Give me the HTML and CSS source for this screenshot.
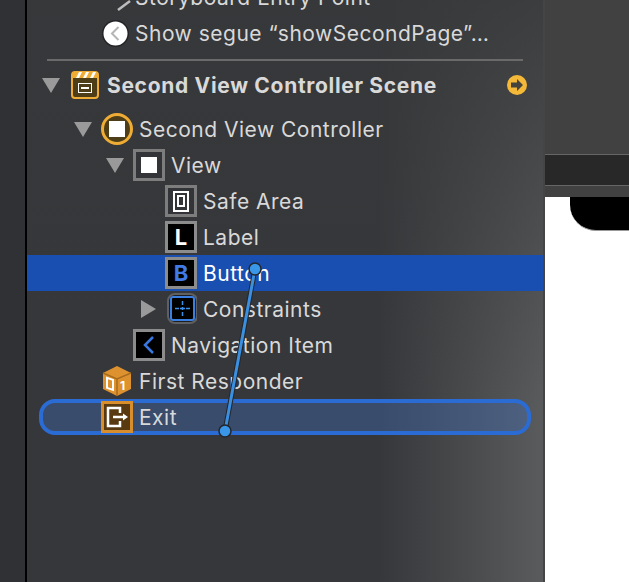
FILE: index.html
```html
<!DOCTYPE html>
<html lang="en">
<head>
<meta charset="utf-8">
<title>Document Outline</title>
<link rel="stylesheet" href="styles.css">
</head>
<body>
<div class="app">
  <div class="gutter"></div>
  <div class="panel">
    <div class="outline">
      <div class="row d2b"><span class="slot"></span>
        <svg class="ic26" viewBox="0 0 27 27"><path d="M16 26 L28 17" fill="none" stroke="#bdbdbd" stroke-width="2.500"/></svg>
        <span class="txt">Storyboard Entry Point</span></div>
      <div class="row d2b"><span class="slot"></span>
        <svg class="ic26" viewBox="0 0 27 27"><circle cx="13.500" cy="13.500" r="13.500" fill="#232427"/><circle cx="13.500" cy="13.500" r="12" fill="#fff"/><path d="M16.500 7 L10 13.500 L16.500 20" fill="none" stroke="#b5b5b5" stroke-width="2"/></svg>
        <span class="txt">Show segue “showSecondPage”…</span></div>
      <div class="sep"></div>
      <div class="row scene d1"><span class="slot"><i class="tri"></i></span>
        <svg class="ic28" viewBox="0 0 28 28"><rect x="1" y="1" width="26" height="26" rx="3" fill="#4e3e18" stroke="#f0ad35" stroke-width="2"/><rect x="1" y="1" width="26" height="6" fill="#f0ad35"/><path d="M5 7l3-6h3l-3 6zM12 7l3-6h3l-3 6zM19 7l3-6h3l-3 6z" fill="#fff"/><rect x="7" y="12" width="14" height="10" fill="#fff"/><rect x="8" y="13" width="12" height="8" fill="#4e3e18"/><rect x="10" y="16" width="8" height="2" fill="#fff"/></svg>
        <span class="txt bold">Second View Controller Scene</span>
        <svg class="goto" viewBox="0 0 20 20"><circle cx="10" cy="10" r="10" fill="#f5b93a"/><path d="M4 7.500h6V4l6 6-6 6v-3.500H4z" fill="#44433d"/></svg>
      </div>
      <div class="row d2"><span class="slot"><i class="tri"></i></span>
        <svg class="ic32" viewBox="0 0 32 32"><circle cx="16" cy="16" r="14.500" fill="#4e3e18" stroke="#f0ad35" stroke-width="3"/><rect x="8" y="8" width="16" height="16" fill="#fff"/></svg>
        <span class="txt">Second View Controller</span></div>
      <div class="row d3"><span class="slot"><i class="tri"></i></span>
        <span class="box view"><i class="sq"></i></span>
        <span class="txt">View</span></div>
      <div class="row d4"><span class="slot"></span>
        <span class="box view"><i class="safe"><i class="safe-in"></i></i></span>
        <span class="txt">Safe Area</span></div>
      <div class="row d4"><span class="slot"></span>
        <span class="box dark lbl">L</span>
        <span class="txt">Label</span></div>
      <div class="row d4 selected"><span class="slot"></span>
        <span class="box dark btn">B</span>
        <span class="txt">Button</span></div>
      <div class="row d4"><span class="slot"><i class="tri side"></i></span>
        <svg class="ic32" viewBox="0 0 32 32"><rect x="3" y="1" width="29" height="29" rx="7" fill="#1d1e20" stroke="#606062" stroke-width="2"/><rect x="6" y="4" width="23" height="23" rx="2" fill="#000" stroke="#3a7fe0" stroke-width="2"/><path d="M17.500 8v4M17.500 14v3M17.500 19v4M10 15.500h4M15 15.500h5M21 15.500h4" stroke="#3a8fe6" stroke-width="1.500" fill="none"/></svg>
        <span class="txt">Constraints</span></div>
      <div class="row d3"><span class="slot"></span>
        <span class="box dark"><svg class="inner" viewBox="0 0 26 26"><path d="M17 5 L9 13 L17 21" fill="none" stroke="#3a78e0" stroke-width="2.500"/></svg></span>
        <span class="txt">Navigation Item</span></div>
      <div class="row d2"><span class="slot"></span>
        <svg class="ic32" viewBox="0 0 32 32"><path d="M16 1 L30 8 V24 L16 31 L2 24 V8 Z" fill="#dd922f"/><path d="M2 8 L16 14 L30 8 M16 14 V31" fill="none" stroke="#a86c1c" stroke-width="1.500"/><rect x="6" y="14" width="6" height="10" fill="none" stroke="#fff" stroke-width="2" transform="skewY(18) translate(0 -3)"/><text x="19" y="25" class="cube1">1</text></svg>
        <span class="txt">First Responder</span></div>
      <div class="row exit"><span class="slot"></span>
        <span class="box exitbox"><svg class="inner" viewBox="0 0 26 26"><path d="M16 9V4H4v18h12v-5" fill="none" stroke="#fff" stroke-width="2.500"/><path d="M9 13h11" stroke="#fff" stroke-width="2.500"/><path d="M19 9.500l5 3.500-5 3.500z" fill="#fff"/></svg></span>
        <span class="txt">Exit</span></div>
    </div>
  </div>
  <div class="canvas">
    <div class="bar-top"></div>
    <div class="bar-dark"></div>
    <div class="bar-low"></div>
    <div class="sheet"><div class="notch"></div></div>
  </div>
  <svg class="wire" viewBox="0 0 629 582">
    <line x1="255" y1="269" x2="225" y2="431" stroke="#23262b" stroke-width="5"/>
    <line x1="255" y1="269" x2="225" y2="431" stroke="#3a8fe0" stroke-width="3"/>
    <circle cx="255" cy="269" r="6" fill="#3a96e6" stroke="#23262b" stroke-width="1.500"/>
    <circle cx="225" cy="431" r="6" fill="#3a96e6" stroke="#23262b" stroke-width="1.500"/>
  </svg>
</div>
</body>
</html>
```
FILE: styles.css
```css
* { box-sizing: border-box; }
html, body { margin: 0; height: 100%; background: #333; overflow: hidden; }
.app {
  position: relative;
  display: flex;
  width: 629px;
  height: 582px;
  font-family: Inter, "Liberation Sans", sans-serif;
  font-size: 21px;
  letter-spacing: 0.5px;
  color: #d9d9d9;
}
.gutter { width: 27px; background: #303134; border-right: 2px solid #000; }
.panel {
  width: 518px;
  overflow: hidden;
  border-right: 2px solid #454545;
  background:
    linear-gradient(to bottom, rgba(55, 56, 58, 0.85) 0%, rgba(55, 56, 58, 0) 70%),
    linear-gradient(90deg, #36373a 68%, #5a5b5c 100%);
}
.outline { margin-top: -21px; }
.row { display: flex; align-items: center; height: 36px; }
.d1 { padding-left: 12px; }
.d2b { padding-left: 43px; }
.d2 { padding-left: 42px; }
.d3 { padding-left: 74px; }
.d4 { padding-left: 106px; }
.slot { display: flex; justify-content: flex-end; align-items: center; width: 32px; padding-right: 9px; flex: none; }
.tri { width: 0; height: 0; border-left: 9px solid transparent; border-right: 9px solid transparent; border-top: 15px solid #9a9a9a; }
.tri.side { border-top: 9px solid transparent; border-bottom: 9px solid transparent; border-left: 15px solid #9a9a9a; border-right: 0; }
.scene .slot { padding-right: 11px; }
.ic26 { width: 27px; height: 27px; flex: none; overflow: visible; }
.ic28 { width: 28px; height: 28px; flex: none; }
.ic32 { width: 32px; height: 32px; flex: none; }
.txt { margin-left: 6px; white-space: nowrap; }
.scene .txt { margin-left: 8px; }
.bold { font-weight: 700; letter-spacing: 0.68px; }
.goto { width: 20px; height: 20px; margin-left: auto; margin-right: 16px; flex: none; }
.sep { height: 2px; margin: 8px 20px 6px; background: #6a6a6b; }
.scene { margin-bottom: 8px; }
.box { display: flex; align-items: center; justify-content: center; width: 32px; height: 32px; border: 3px solid #7d7d7d; flex: none; letter-spacing: 0; }
.view { background: #333438; }
.dark { background: #000; border-color: #8c8c8c; }
.sq { display: block; width: 16px; height: 16px; background: #fff; }
.safe { display: flex; align-items: center; justify-content: center; width: 16px; height: 21px; border: 2px solid #fff; background: #333438; }
.safe-in { display: block; width: 8px; height: 12px; border: 2px solid #fff; }
.lbl { color: #fff; font-weight: 700; font-size: 22px; }
.btn { color: #3f7ae6; font-weight: 700; font-size: 22px; }
.inner { width: 26px; height: 26px; }
.selected { background: #1a4fb2; }
.selected .txt { color: #fff; }
.cube1 { fill: #fff; font-size: 12px; font-weight: 700; letter-spacing: 0; }
.exit {
  margin: 0 12px;
  padding-left: 26px;
  border: 4px solid #2a6cd4;
  border-radius: 16px;
  background: rgba(62, 110, 190, 0.38);
}
.exitbox { background: #593a10; border-color: #d98e2d; }
.canvas { display: flex; flex-direction: column; flex: 1; }
.bar-top { height: 155px; background: #414141; border-bottom: 1px solid #666; }
.bar-dark { height: 31px; background: #282828; border-bottom: 1px solid #666; }
.bar-low { height: 11px; background: #414141; }
.sheet { flex: 1; background: #fff; }
.notch { height: 34px; margin-left: 25px; background: #000; border-bottom-left-radius: 26px; border-bottom: 1px solid #999; }
.wire { position: absolute; left: 0; top: 0; width: 629px; height: 582px; pointer-events: none; }
```
